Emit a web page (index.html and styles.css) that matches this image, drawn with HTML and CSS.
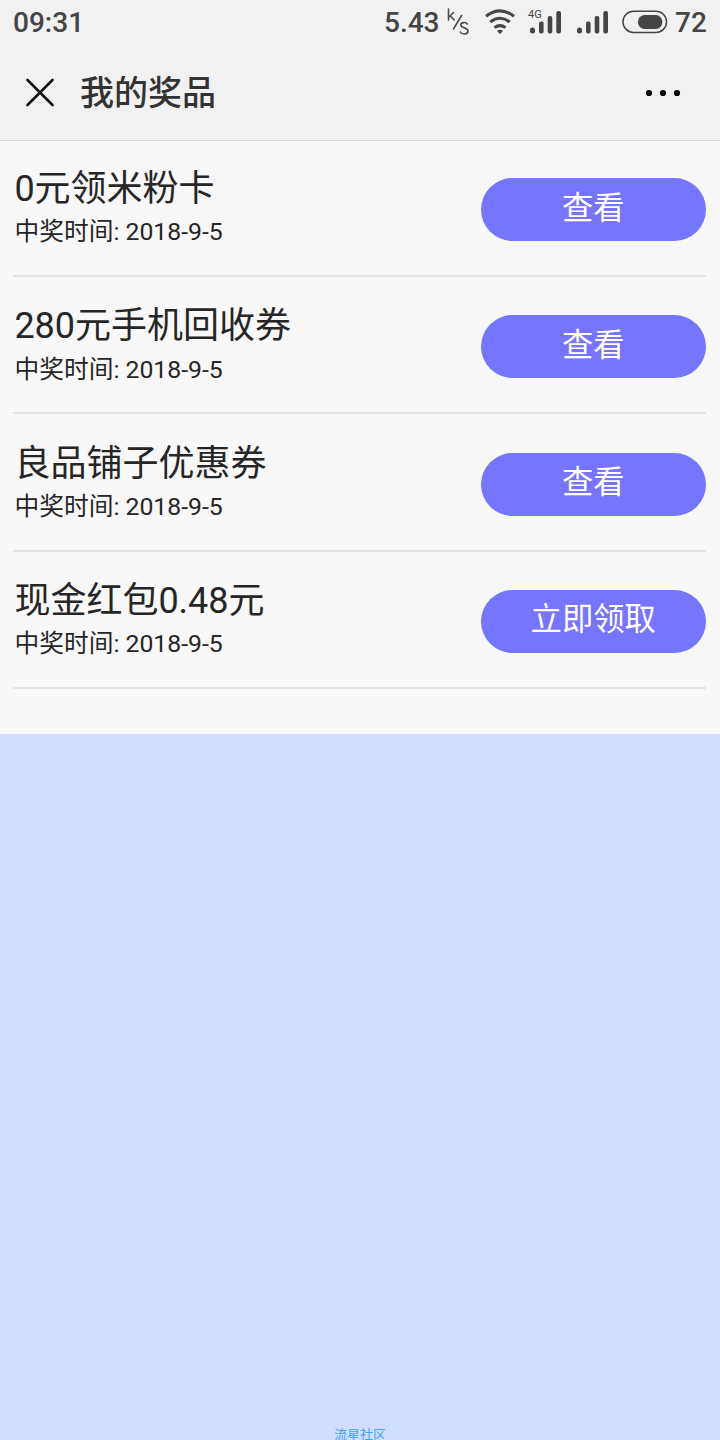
FILE: index.html
```html
<!DOCTYPE html>
<html lang="zh-CN">
<head>
<meta charset="utf-8">
<title>我的奖品</title>
<link rel="stylesheet" href="styles.css">
</head>
<body>
<header class="top">
  <div class="status">
    <span class="time">09:31</span>
    <span class="speed">5.43</span>
    <svg class="unit" width="24" height="30" viewBox="0 0 24 30" fill="none" stroke="#4a4a4a" stroke-width="1.6" stroke-linecap="round" stroke-linejoin="round"><path d="M2.500 2V13M7.500 5.500L2.500 10.500M4.300 9L8.200 13M15.500 8.500L7.500 22M21.300 17C20 14.900 14.800 15 14.800 18C14.800 21.300 22 20 22 24C22 28 15.500 27.600 14.300 25"/></svg>
    <svg class="wifi" width="30" height="26" viewBox="0 0 30 26" fill="none" stroke="#454545" stroke-width="3"><path d="M1 7.200Q15-3.400 29 7.200M5.300 13Q15 5.600 24.700 13M9.500 18.600Q15 14.600 20.500 18.600"/><path d="M12 21.800Q15 19.600 18 21.800L15 25.200Z" fill="#454545" stroke="none"/></svg>
    <div class="signal">
      <svg width="34" height="26" viewBox="0 0 34 26" fill="#454545"><rect x="2" y="18.500" width="5" height="6" rx="2.500"/><rect x="11" y="12.500" width="4.600" height="12" rx="2"/><rect x="19.700" y="7" width="4.600" height="17.500" rx="2"/><rect x="28.300" y="2" width="4.700" height="22.500" rx="2"/></svg>
      <span class="net">4G</span>
    </div>
    <svg class="signal-two" width="34" height="26" viewBox="0 0 34 26" fill="#454545"><rect x="2" y="18.500" width="5" height="6" rx="2.500"/><rect x="11" y="12.500" width="4.600" height="12" rx="2"/><rect x="19.700" y="7" width="4.600" height="17.500" rx="2"/><rect x="28.300" y="2" width="4.700" height="22.500" rx="2"/></svg>
    <svg class="battery" width="46" height="24" viewBox="0 0 46 24"><rect x="1" y="1.200" width="43.500" height="21.300" rx="10.600" fill="none" stroke="#454545" stroke-width="1.500"/><rect x="16" y="5" width="24.300" height="14" rx="6.500" fill="#454545"/></svg>
    <span class="level">72</span>
  </div>
  <div class="nav">
    <svg class="close" width="30" height="30" viewBox="0 0 30 30" stroke="#141414" stroke-width="2.600" stroke-linecap="round"><path d="M2.500 2L27.500 27M27.500 2L2.500 27"/></svg>
    <h1 class="title">我的奖品</h1>
    <svg class="more" width="36" height="8" viewBox="0 0 36 8"><circle cx="4" cy="4" r="3.100"/><circle cx="18" cy="4" r="3.100"/><circle cx="32" cy="4" r="3.100"/></svg>
  </div>
</header>
<main class="list">
  <section class="prize"><div class="info"><h2 class="name">0元领米粉卡</h2><p class="date">中奖时间: 2018-9-5</p></div><button class="action">查看</button></section>
  <section class="prize"><div class="info"><h2 class="name">280元手机回收券</h2><p class="date">中奖时间: 2018-9-5</p></div><button class="action">查看</button></section>
  <section class="prize"><div class="info"><h2 class="name">良品铺子优惠券</h2><p class="date">中奖时间: 2018-9-5</p></div><button class="action">查看</button></section>
  <section class="prize"><div class="info"><h2 class="name">现金红包0.48元</h2><p class="date">中奖时间: 2018-9-5</p></div><button class="action">立即领取</button></section>
</main>
<footer class="footer">流星社区</footer>
</body>
</html>
```
FILE: styles.css
```css
* { box-sizing: border-box; }
body {
  margin: 0;
  width: 720px;
  height: 1440px;
  overflow: hidden;
  display: flex;
  flex-direction: column;
  background: #d2deff;
  color: #262626;
  font-family: Roboto, "Noto Sans CJK SC", sans-serif;
}
h1, h2, p { margin: 0; font-weight: 400; }
svg { display: block; flex: none; }
.top {
  height: 141px;
  flex: none;
  background: #f1f1f1;
  border-bottom: 1px solid #d9d9d9;
}
.status {
  height: 44px;
  display: flex;
  align-items: center;
  padding-left: 13px;
  color: #454545;
  font-size: 28px;
  font-weight: 500;
  line-height: 42px;
}
.time, .speed, .level { padding-top: 2px; }
.time { width: 371px; }
.speed { width: 62px; }
.wifi { margin-left: 15px; }
.signal { position: relative; margin-left: 13px; }
.net {
  position: absolute;
  left: 0;
  top: 0;
  font-size: 11px;
  line-height: 11px;
  font-weight: 400;
}
.signal-two { margin-left: 13px; }
.battery { margin-left: 13px; }
.level { margin-left: 7px; }
.nav {
  height: 97px;
  display: flex;
  align-items: center;
  padding: 0 39px 0 25px;
}
.title {
  flex: 1;
  margin-left: 25px;
  font-size: 34px;
  line-height: 50px;
  font-weight: 500;
  color: #333;
}
.list {
  height: 593px;
  flex: none;
  padding: 0 13.6px 0 13.4px;
  background: #f8f8f8;
}
.prize {
  height: 137.25px;
  display: flex;
  justify-content: space-between;
  border-bottom: 2px solid #e2e2e2;
}
.prize:first-child { height: 136px; }
.prize:first-child .info { padding-top: 24px; }
.prize:first-child .action { margin-top: 37px; }
.info { padding: 25.400px 0 0 1px; }
.name { font-size: 36px; line-height: 48px; }
.date { font-size: 24.750px; line-height: 36px; margin-top: 1.200px; }
.action {
  width: 225.4px;
  height: 63px;
  margin-top: 38.400px;
  padding: 0 1px 2px 0;
  border: 0;
  border-radius: 32px;
  background: #7575ff;
  color: #fff;
  font: 31.300px/50px Roboto, "Noto Sans CJK SC", sans-serif;
}
.footer {
  margin-top: auto;
  height: 15px;
  font-size: 13px;
  line-height: 19px;
  text-align: center;
  color: #40a5ff;
}
```
